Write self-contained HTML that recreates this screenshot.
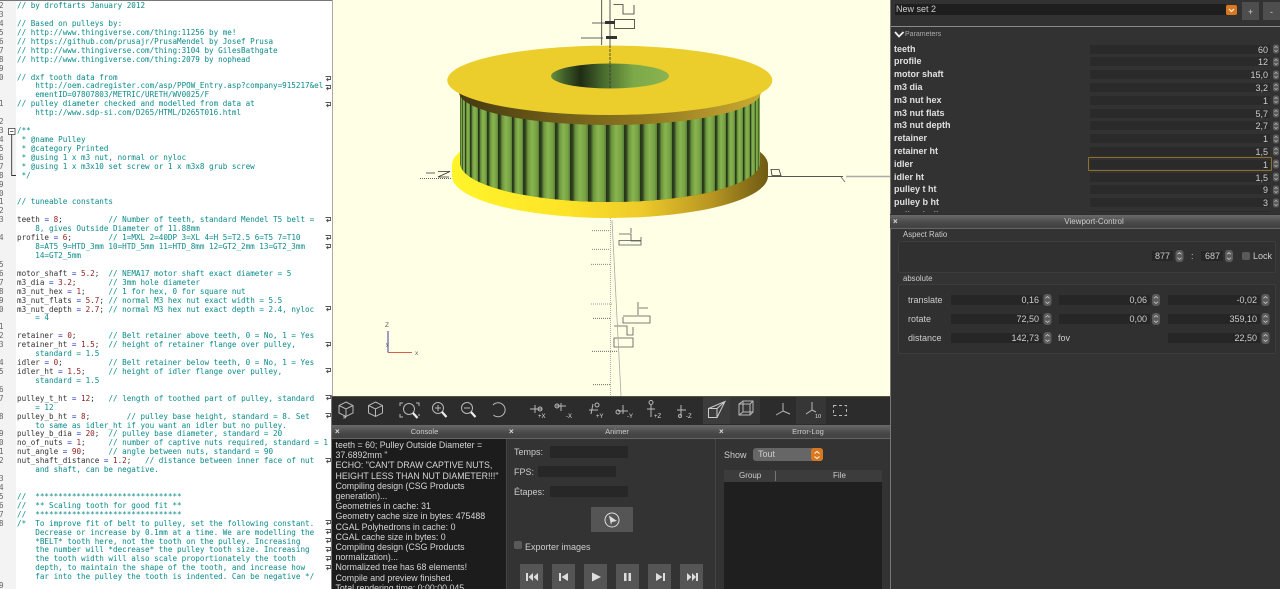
<!DOCTYPE html>
<html><head><meta charset="utf-8"><title>OpenSCAD</title>
<style>
*{box-sizing:border-box}
html,body{margin:0;padding:0;width:1280px;height:589px;overflow:hidden;background:#2f2f2f;font-family:"Liberation Sans",sans-serif;color:#ddd}
.a{position:absolute}
#ed{left:0;top:0;width:332px;height:589px;background:#fff;overflow:hidden;border-top:1px solid #777}
#gut{left:0;top:0;width:16px;height:589px;background:#f3f3f3}
pre{position:absolute;margin:0;font:7.6px/8.92px "DejaVu Sans Mono","Liberation Mono",monospace;color:#333}
pre i{font-style:normal;color:#0b8a8a}
pre b{font-weight:normal;color:#8e1a1a}
pre u{text-decoration:none;color:#2030c0}
.t{position:absolute;height:14px;background:linear-gradient(#6a6a6a,#494949 55%,#414141 90%,#777);font-size:7.5px;line-height:14px;text-align:center;color:#ccc}
.t s{position:absolute;left:3px;top:0;text-decoration:none;font-size:8px;color:#ddd;font-weight:bold}
.in{position:absolute;background:#272727}
.l{position:absolute;font-size:9px;line-height:12px;color:#ccc;white-space:nowrap}
.b{position:absolute;background:#555}
.r{position:relative;height:12.8px;line-height:12.8px;font-size:9px;font-weight:bold;color:#e0e0e0;padding-left:4px;white-space:nowrap}
.r span{position:absolute;left:200px;width:180px;top:2px;height:9px;background:#2a2a2a;color:#ccc;font-weight:normal;text-align:right;line-height:10px;padding-right:2px;font-size:9px}
.v{position:absolute;height:10px;background:#262626;color:#ccc;font-size:9px;line-height:10px;text-align:right;padding-right:3px}
</style></head><body>

<div id="ed" class="a">
<div id="gut" class="a"></div>
<pre style="left:-1px;top:1.2px;color:#666">2
3
4
5
6
7
8
9
0


1

2
3
4
5
6
7
8
9
0
1
2
3

4


5
6
7
8
9
0

1
2
3

4
5

6
7

8

9
0
1
2

3
4
5
6
7
8






9</pre>
<pre style="left:17px;top:1.2px"><i>// by droftarts January 2012</i>

<i>// Based on pulleys by:</i>
<i>// http://www.thingiverse.com/thing:11256 by me!</i>
<i>// https://github.com/prusajr/PrusaMendel by Josef Prusa</i>
<i>// http://www.thingiverse.com/thing:3104 by GilesBathgate</i>
<i>// http://www.thingiverse.com/thing:2079 by nophead</i>

<i>// dxf tooth data from</i>
<i>    http://oem.cadregister.com/asp/PPOW_Entry.asp?company=915217&amp;el</i>
<i>    ementID=07807803/METRIC/URETH/WV0025/F</i>
<i>// pulley diameter checked and modelled from data at</i>
<i>    http://www.sdp-si.com/D265/HTML/D265T016.html</i>

<i>/**</i>
<i> * @name Pulley</i>
<i> * @category Printed</i>
<i> * @using 1 x m3 nut, normal or nyloc</i>
<i> * @using 1 x m3x10 set screw or 1 x m3x8 grub screw</i>
<i> */</i>


<i>// tuneable constants</i>

teeth <u>=</u> <b>8</b>;          <i>// Number of teeth, standard Mendel T5 belt =</i>
<i>    8, gives Outside Diameter of 11.88mm</i>
profile <u>=</u> <b>6</b>;        <i>// 1=MXL 2=40DP 3=XL 4=H 5=T2.5 6=T5 7=T10</i>
<i>    8=AT5 9=HTD_3mm 10=HTD_5mm 11=HTD_8mm 12=GT2_2mm 13=GT2_3mm</i>
<i>    14=GT2_5mm</i>

motor_shaft <u>=</u> <b>5.2</b>;  <i>// NEMA17 motor shaft exact diameter = 5</i>
m3_dia <u>=</u> <b>3.2</b>;       <i>// 3mm hole diameter</i>
m3_nut_hex <u>=</u> <b>1</b>;     <i>// 1 for hex, 0 for square nut</i>
m3_nut_flats <u>=</u> <b>5.7</b>; <i>// normal M3 hex nut exact width = 5.5</i>
m3_nut_depth <u>=</u> <b>2.7</b>; <i>// normal M3 hex nut exact depth = 2.4, nyloc</i>
<i>    = 4</i>

retainer <u>=</u> <b>0</b>;       <i>// Belt retainer above teeth, 0 = No, 1 = Yes</i>
retainer_ht <u>=</u> <b>1.5</b>;  <i>// height of retainer flange over pulley,</i>
<i>    standard = 1.5</i>
idler <u>=</u> <b>0</b>;          <i>// Belt retainer below teeth, 0 = No, 1 = Yes</i>
idler_ht <u>=</u> <b>1.5</b>;     <i>// height of idler flange over pulley,</i>
<i>    standard = 1.5</i>

pulley_t_ht <u>=</u> <b>12</b>;   <i>// length of toothed part of pulley, standard</i>
<i>    = 12</i>
pulley_b_ht <u>=</u> <b>8</b>;        <i>// pulley base height, standard = 8. Set</i>
<i>    to same as idler_ht if you want an idler but no pulley.</i>
pulley_b_dia <u>=</u> <b>20</b>;  <i>// pulley base diameter, standard = 20</i>
no_of_nuts <u>=</u> <b>1</b>;     <i>// number of captive nuts required, standard = 1</i>
nut_angle <u>=</u> <b>90</b>;     <i>// angle between nuts, standard = 90</i>
nut_shaft_distance <u>=</u> <b>1.2</b>;   <i>// distance between inner face of nut</i>
<i>    and shaft, can be negative.</i>


<i>//  ********************************</i>
<i>//  ** Scaling tooth for good fit **</i>
<i>//  ********************************</i>
<i>/*  To improve fit of belt to pulley, set the following constant.</i>
<i>    Decrease or increase by 0.1mm at a time. We are modelling the</i>
<i>    *BELT* tooth here, not the tooth on the pulley. Increasing</i>
<i>    the number will *decrease* the pulley tooth size. Increasing</i>
<i>    the tooth width will also scale proportionately the tooth</i>
<i>    depth, to maintain the shape of the tooth, and increase how</i>
<i>    far into the pulley the tooth is indented. Can be negative */</i></pre>
</div>
<div class="a" style="left:331px;top:395px;width:1px;height:194px;background:#777"></div>

<!-- viewport -->
<div class="a" style="left:332px;top:0;width:558px;height:396px;background:#ffffe5;border-left:1px solid #aaa"></div>

<!-- toolbar -->
<div class="a" style="left:332px;top:396px;width:558px;height:29px;background:#2c2c2c;border-top:1px solid #55553a"></div>
<div class="a" style="left:703px;top:397px;width:27px;height:27px;background:#3c3c3c"></div>
<div class="a" style="left:730px;top:397px;width:30px;height:27px;background:#363636"></div>
<div class="a" style="left:796px;top:397px;width:30px;height:27px;background:#363636"></div>

<!-- dock titles -->
<div class="t" style="left:332px;top:425px;width:174px;padding-left:11px">Console<s>×</s></div>
<div class="t" style="left:506px;top:425px;width:210px;padding-left:12px">Animer<s>×</s></div>
<div class="t" style="left:716px;top:425px;width:174px;padding-left:10px">Error-Log<s>×</s></div>

<!-- console -->
<div class="a" style="left:332px;top:439px;width:174px;height:150px;background:#1c1c1c;overflow:hidden;padding:1px 0 0 3.5px;font-size:8.8px;line-height:10.2px;color:#d6d6d6;white-space:nowrap">teeth = 60; Pulley Outside Diameter =<br>37.6892mm "<br>ECHO: "CAN'T DRAW CAPTIVE NUTS,<br>HEIGHT LESS THAN NUT DIAMETER!!!"<br>Compiling design (CSG Products<br>generation)...<br>Geometries in cache: 31<br>Geometry cache size in bytes: 475488<br>CGAL Polyhedrons in cache: 0<br>CGAL cache size in bytes: 0<br>Compiling design (CSG Products<br>normalization)...<br>Normalized tree has 68 elements!<br>Compile and preview finished.<br>Total rendering time: 0:00:00.045</div>

<!-- animer -->
<div class="a" style="left:506px;top:439px;width:210px;height:150px;background:#333;border-left:1px solid #444;border-right:1px solid #444"></div>
<div class="l" style="left:514px;top:446px">Temps:</div>
<div class="in" style="left:550px;top:446px;width:78px;height:12px"></div>
<div class="l" style="left:514px;top:466px">FPS:</div>
<div class="in" style="left:538px;top:466px;width:78px;height:11px"></div>
<div class="l" style="left:514px;top:486px">Étapes:</div>
<div class="in" style="left:550px;top:486px;width:78px;height:11px"></div>
<div class="b" style="left:591px;top:507px;width:42px;height:25px"></div>
<div class="a" style="left:514px;top:541px;width:8px;height:8px;background:#5a5a5a;border-radius:2px"></div>
<div class="l" style="left:525px;top:541px">Exporter images</div>
<div class="b" style="left:520px;top:564px;width:23px;height:25px"></div>
<div class="b" style="left:552px;top:564px;width:23px;height:25px"></div>
<div class="b" style="left:584px;top:564px;width:23px;height:25px"></div>
<div class="b" style="left:616px;top:564px;width:23px;height:25px"></div>
<div class="b" style="left:648px;top:564px;width:23px;height:25px"></div>
<div class="b" style="left:680px;top:564px;width:23px;height:25px"></div>

<!-- error log -->
<div class="a" style="left:716px;top:439px;width:174px;height:150px;background:#333"></div>
<div class="l" style="left:724px;top:449px">Show</div>
<div class="a" style="left:753px;top:448px;width:70px;height:13px;background:#666;border-radius:3px;font-size:9px;line-height:13px;padding-left:5px;color:#ccc">Tout</div>
<div class="a" style="left:811px;top:448px;width:12px;height:13px;background:#d9781f;border-radius:3px"></div>
<div class="a" style="left:724px;top:470px;width:158px;height:12px;background:#3c3c3c"></div>
<div class="l" style="left:739px;top:470px;font-size:8px">Group</div>
<div class="a" style="left:775px;top:471px;width:1px;height:10px;background:#777"></div>
<div class="l" style="left:833px;top:470px;font-size:8px">File</div>
<div class="a" style="left:724px;top:482px;width:158px;height:107px;background:#1f1f1f"></div>

<!-- right top panel -->
<div class="a" style="left:890px;top:0;width:390px;height:214px;background:#323232;border-left:1px solid #777"></div>
<div class="a" style="left:895px;top:4px;width:331px;height:11px;background:#1e1e1e;font-size:9px;line-height:11px;padding-left:1px;color:#ccc">New set 2</div>
<div class="a" style="left:1226px;top:5px;width:11px;height:10px;background:#d9781f;border-radius:2px"></div>
<div class="b" style="left:1242px;top:2px;width:17px;height:18px;background:#4e4e4e;color:#ccc;font-size:9px;line-height:20px;text-align:center">+</div>
<div class="b" style="left:1263px;top:2px;width:17px;height:18px;background:#4e4e4e;color:#ccc;font-size:9px;line-height:20px;text-align:center">-</div>
<div class="a" style="left:891px;top:26px;width:389px;height:1px;background:#8a8a8a"></div>
<div class="l" style="left:905px;top:28.5px;font-size:7px;color:#aaa">Parameters</div>
<div class="a" style="left:890px;top:42.6px;width:390px;height:169px;overflow:hidden">
<div class="r">teeth<span>60</span></div>
<div class="r">profile<span>12</span></div>
<div class="r">motor shaft<span>15,0</span></div>
<div class="r">m3 dia<span>3,2</span></div>
<div class="r">m3 nut hex<span>1</span></div>
<div class="r">m3 nut flats<span>5,7</span></div>
<div class="r">m3 nut depth<span>2,7</span></div>
<div class="r">retainer<span>1</span></div>
<div class="r">retainer ht<span>1,5</span></div>
<div class="r">idler<span>1</span></div>
<div class="r">idler ht<span>1,5</span></div>
<div class="r">pulley t ht<span>9</span></div>
<div class="r">pulley b ht<span>3</span></div>
<div class="r">pulley b dia<span>20</span></div>
</div>
<div class="a" style="left:1088px;top:157px;width:184px;height:14px;border:1.5px solid #8f6e2c;border-radius:1px"></div>

<!-- viewport control -->
<div class="t" style="left:890px;top:215px;width:390px;font-size:8px;padding-left:18px">Viewport-Control<s>×</s></div>
<div class="a" style="left:890px;top:229px;width:390px;height:360px;background:#333;border-left:1px solid #777"></div>
<div class="l" style="left:903px;top:229px;font-size:7.8px">Aspect Ratio</div>
<div class="a" style="left:898px;top:241px;width:378px;height:32px;background:#303030;border:1px solid #3c3c3c;border-radius:2px"></div>
<div class="v" style="left:1152px;top:251px;width:21px">877</div>
<div class="l" style="left:1191px;top:250px">:</div>
<div class="v" style="left:1201px;top:251px;width:22px">687</div>
<div class="a" style="left:1242px;top:252px;width:8px;height:8px;background:#5a5a5a;border-radius:2px"></div>
<div class="l" style="left:1253px;top:250px">Lock</div>
<div class="l" style="left:903px;top:273px;font-size:7.8px">absolute</div>
<div class="a" style="left:898px;top:284px;width:378px;height:70px;background:#303030;border:1px solid #3c3c3c;border-radius:2px"></div>
<div class="l" style="left:908px;top:294px">translate</div>
<div class="l" style="left:908px;top:313px">rotate</div>
<div class="l" style="left:908px;top:332px">distance</div>
<div class="l" style="left:1058px;top:332px">fov</div>
<div class="v" style="left:951px;top:295px;width:91px">0,16</div>
<div class="v" style="left:1059px;top:295px;width:91px">0,06</div>
<div class="v" style="left:1168px;top:295px;width:92px">-0,02</div>
<div class="v" style="left:951px;top:314px;width:91px">72,50</div>
<div class="v" style="left:1059px;top:314px;width:91px">0,00</div>
<div class="v" style="left:1168px;top:314px;width:92px">359,10</div>
<div class="v" style="left:951px;top:333px;width:91px">142,73</div>
<div class="v" style="left:1168px;top:333px;width:92px">22,50</div>

<svg class="a" style="left:0;top:0" width="1280" height="589" viewBox="0 0 1280 589" xmlns="http://www.w3.org/2000/svg">
<defs>
<linearGradient id="t"><stop offset="0" stop-color="#26331a"/><stop offset=".14" stop-color="#2e3f1e"/><stop offset=".3" stop-color="#6a963c"/><stop offset=".55" stop-color="#8ab450"/><stop offset=".85" stop-color="#76a244"/><stop offset="1" stop-color="#5a8034"/></linearGradient>
<linearGradient id="fl" gradientUnits="userSpaceOnUse" x1="452" y1="0" x2="768" y2="0"><stop offset="0" stop-color="#fff42a"/><stop offset=".35" stop-color="#fde428"/><stop offset=".6" stop-color="#eeca2a"/><stop offset=".82" stop-color="#b89622"/><stop offset="1" stop-color="#6e5a14"/></linearGradient>
<linearGradient id="rim" gradientUnits="userSpaceOnUse" x1="447" y1="0" x2="772" y2="0"><stop offset="0" stop-color="#3e3510"/><stop offset=".3" stop-color="#6a5818"/><stop offset=".6" stop-color="#8e7620"/><stop offset=".85" stop-color="#b89a2c"/><stop offset="1" stop-color="#d0b030"/></linearGradient>
<linearGradient id="hole"><stop offset="0" stop-color="#6a9040"/><stop offset=".12" stop-color="#3f5c28"/><stop offset=".25" stop-color="#1e2c14"/><stop offset=".45" stop-color="#4a6c2e"/><stop offset=".7" stop-color="#7ca848"/><stop offset="1" stop-color="#8ab450"/></linearGradient>
<clipPath id="body"><path d="M460 90H760V163A150 39 0 0 1 460 163Z"/></clipPath>
<symbol id="sp" viewBox="0 0 8 12" overflow="visible"><rect width="8" height="12" rx="3" fill="#5c5c5c"/><path d="M2 4.3 4 2.5 6 4.3M2 7.7 4 9.5 6 7.7" fill="none" stroke="#ccc" stroke-width=".8"/></symbol>
<symbol id="w" viewBox="0 0 7 7" overflow="visible"><path d="M.5 1.5H5.5V4.5H1.8M3.2 3 1.6 4.5 3.2 6" fill="none" stroke="#555" stroke-width=".9"/></symbol>
</defs>

<!-- wrap arrows -->
<g>
<use href="#w" x="325" y="75" width="7" height="7"/><use href="#w" x="325" y="84" width="7" height="7"/><use href="#w" x="325" y="101" width="7" height="7"/>
<use href="#w" x="325" y="216" width="7" height="7"/><use href="#w" x="325" y="234" width="7" height="7"/><use href="#w" x="325" y="243" width="7" height="7"/>
<use href="#w" x="325" y="305" width="7" height="7"/><use href="#w" x="325" y="341" width="7" height="7"/><use href="#w" x="325" y="367" width="7" height="7"/>
<use href="#w" x="325" y="394" width="7" height="7"/><use href="#w" x="325" y="412" width="7" height="7"/><use href="#w" x="325" y="457" width="7" height="7"/>
<use href="#w" x="325" y="519" width="7" height="7"/><use href="#w" x="325" y="528" width="7" height="7"/><use href="#w" x="325" y="537" width="7" height="7"/>
<use href="#w" x="325" y="546" width="7" height="7"/><use href="#w" x="325" y="555" width="7" height="7"/><use href="#w" x="325" y="564" width="7" height="7"/>
</g>
<!-- fold -->
<rect x="8.5" y="128.5" width="6.5" height="6" fill="#fff" stroke="#444" stroke-width=".8"/><path d="M10 131.5H13.5" stroke="#444" stroke-width=".8"/>
<path d="M11.7 134.5V175.5H16" fill="none" stroke="#333" stroke-width=".9"/>

<!-- axes behind model -->
<g fill="none" stroke="#333" stroke-width=".8">
<path d="M601.7 0V45M610 0V60"/>
<path d="M592 23H615M581 38H603"/>
<path d="M614 5V4.5H623V14H634V5"/>
<rect x="614.5" y="19.5" width="20" height="9"/>
<path d="M426 173H435M438 171.5H450L438 177H449"/>
<path d="M771 169.500H779L781 175.500H772Z"/>
<path d="M768 176.500H843" stroke="#555" stroke-width="1"/>
<path d="M846 176.500H890" stroke="#aaa" stroke-width="1.500"/>
<path d="M841 177 845 182" stroke="#666"/>
<path d="M420 178.500H452" stroke-dasharray="1 1"/>
<path d="M619 234H631V241H641V237M619 240.5H641V245H619Z" stroke="#555"/>
<path d="M631 228V233M638 302V315M639 308H648M623 317V323H650V316H623" stroke="#555"/>
<path d="M614 347V338H633V347ZM614 326H627V335H633V327" stroke="#555"/>
<path d="M610.6 218V396" stroke="#999" stroke-dasharray="1 1"/>
<path d="M612 220 621 396" stroke="#aaa"/>
<path d="M592 230.7H610M592 249.3H610M591 264.3H611M591 304H612" stroke="#777" stroke-dasharray="1 1"/>
<path d="M593 318.3H611M592 351.3H618M593 384.7H610" stroke="#555" stroke-dasharray="1 1"/>
</g>

<!-- pulley -->
<ellipse cx="610" cy="176" rx="158" ry="42" fill="url(#fl)"/>
<rect x="452" y="165" width="316" height="11" fill="url(#fl)"/>
<ellipse cx="610" cy="165" rx="158" ry="42" fill="url(#fl)"/>
<g clip-path="url(#body)">
<rect x="455" y="88" width="310" height="120" fill="#4c6e2c"/>
<g fill="url(#t)">
<rect x="460" y="88" width="2" height="120"/><rect x="462" y="88" width="3" height="120"/><rect x="465" y="88" width="5" height="120"/><rect x="470" y="88" width="8" height="120"/><rect x="478" y="88" width="9" height="120"/><rect x="487" y="88" width="11" height="120"/><rect x="498" y="88" width="14" height="120"/><rect x="512" y="88" width="11" height="120"/><rect x="523" y="88" width="16" height="120"/><rect x="539" y="88" width="16" height="120"/><rect x="555" y="88" width="15" height="120"/><rect x="570" y="88" width="18" height="120"/><rect x="588" y="88" width="18" height="120"/><rect x="606" y="88" width="18" height="120"/><rect x="624" y="88" width="16" height="120"/><rect x="640" y="88" width="17" height="120"/><rect x="657" y="88" width="15" height="120"/><rect x="672" y="88" width="15" height="120"/><rect x="687" y="88" width="15" height="120"/><rect x="702" y="88" width="13" height="120"/><rect x="715" y="88" width="11" height="120"/><rect x="726" y="88" width="9" height="120"/><rect x="735" y="88" width="8" height="120"/><rect x="743" y="88" width="7" height="120"/><rect x="750" y="88" width="5" height="120"/><rect x="755" y="88" width="3" height="120"/><rect x="758" y="88" width="2" height="120"/>
</g></g>
<ellipse cx="610" cy="92" rx="151" ry="33" fill="url(#rim)"/>
<ellipse cx="609.8" cy="80.3" rx="162.5" ry="34.7" fill="#ebce2c"/>
<ellipse cx="610" cy="76" rx="59" ry="12.5" fill="url(#hole)"/>
<path d="M610 45V88" stroke="#333" stroke-width=".8" stroke-dasharray="3 1" fill="none"/>
<rect x="605" y="21" width="10" height="3" fill="#333"/><rect x="606" y="36" width="11" height="3" fill="#333"/>

<!-- axes widget -->
<path d="M388 331V352.5" stroke="#7c7cc0" stroke-width="1.5" fill="none"/>
<path d="M388 352.5H412" stroke="#d06050" stroke-width="1" fill="none"/>
<text x="385" y="327" font-family="Liberation Sans,sans-serif" font-size="6.5" fill="#555">Z</text>
<text x="415" y="355" font-family="Liberation Sans,sans-serif" font-size="6.5" fill="#666">x</text>
<text x="386" y="346" font-family="Liberation Sans,sans-serif" font-size="5" fill="#444">y</text>

<!-- toolbar icons -->
<g fill="none" stroke="#b8b8b8" stroke-width="1">
<path d="M346 402 353 405.5V413L346 416.5 339 413V405.5ZM339 405.5 346 409 353 405.5M346 409V416"/>
<path d="M375.500 402 382.500 405.500V413L375.500 416.500 368.500 413V405.500ZM368.500 405.500 375.500 409 382.500 405.500M375.500 409V416"/>
<path d="M403 403H400V406M416 403H419V406M400 414V417H403M419 414V416"/>
<circle cx="409" cy="409" r="5.500"/><path d="M413 413 417.500 418" stroke="#eee" stroke-width="2.200"/>
<circle cx="438" cy="408" r="5.500"/><path d="M435 408H441M438 405V411"/><path d="M442 412 446.500 417" stroke="#eee" stroke-width="2.200"/>
<circle cx="467" cy="408" r="5.500"/><path d="M464 408H470"/><path d="M471 412 475.500 417" stroke="#eee" stroke-width="2.200"/>
<path d="M493 405A7 7 0 1 1 493.500 415" stroke-width="1"/>
<path d="M530 409H542M535 405V413"/><circle cx="540" cy="409" r="2"/>
<path d="M556 406H566M561 403V411"/><circle cx="557" cy="406" r="2"/>
<path d="M589 410H598M593 404 591 414"/><circle cx="597" cy="405" r="2"/>
<path d="M618 411H628M623 405V414"/><circle cx="618" cy="412" r="2"/>
<path d="M647 409H655M651 404V417"/><circle cx="651" cy="402.500" r="2"/>
<path d="M677 410H686M681 405V416"/><circle cx="680" cy="416" r="1.500"/>
<path d="M708.500 408.500H717V417.500H708.500ZM708.500 408.500 725 401.500 717 417.500M717 408.500 725 401.500" stroke="#ccc"/>
<rect x="739" y="404" width="11" height="11"/><rect x="743" y="401" width="10" height="11"/><path d="M739 404 743 401M750 404 753 401M739 415 743 412M750 415 753 412"/>
<path d="M783 403V411L776 415M783 411 790 414"/>
<path d="M812 402V410L806 414M812 410 816 412"/>
<rect x="833.500" y="405.500" width="13" height="10" stroke-dasharray="3 2.500"/>
</g>
<g fill="#ddd" font-family="Liberation Sans,sans-serif" font-size="6">
<text x="343" y="419" font-weight="bold">»</text>
<text x="538" y="418">+X</text><text x="566" y="418">-X</text><text x="596" y="418">+Y</text><text x="627" y="418">-Y</text><text x="654" y="418">+Z</text><text x="686" y="418">-Z</text>
<text x="815" y="418" font-size="5.500">10</text>
</g>
<!-- animate button + transport -->
<circle cx="612" cy="520" r="7" fill="none" stroke="#ddd" stroke-width="1"/><path d="M609 515.500 617 521 612 522 611 525Z" fill="#ddd"/>
<g fill="#ddd">
<path d="M526 573H528V581H526ZM533 573V581L528.500 577ZM538 573V581L533.500 577Z"/>
<path d="M559 573H561V581H559ZM568 573V581L561.500 577Z"/>
<path d="M592 572.500 601 577 592 581.500Z"/>
<path d="M624 573H626.500V581H624ZM628.500 573H631V581H628.500Z"/>
<path d="M656 573V581L662.500 577ZM663 573H665V581H663Z"/>
<path d="M687 573V581L691.500 577ZM692 573V581L696 577ZM696 573H698V581H696Z"/>
</g>
<!-- orange chevrons -->
<path d="M1229 9 1231.500 11.500 1234 9" fill="none" stroke="#fff" stroke-width="1"/>
<path d="M814.500 453.500 817 451.500 819.500 453.500M814.500 456.500 817 458.500 819.500 456.500" fill="none" stroke="#fff" stroke-width=".9"/>
<path d="M895 32 899 36.500 903.500 32" fill="none" stroke="#eee" stroke-width="1.800"/>
<!-- param spinners -->
<g>
<use href="#sp" x="1273" y="43" width="6" height="12"/><use href="#sp" x="1273" y="56" width="6" height="12"/><use href="#sp" x="1273" y="69" width="6" height="12"/><use href="#sp" x="1273" y="81" width="6" height="12"/><use href="#sp" x="1273" y="94" width="6" height="12"/><use href="#sp" x="1273" y="107" width="6" height="12"/><use href="#sp" x="1273" y="120" width="6" height="12"/><use href="#sp" x="1273" y="133" width="6" height="12"/><use href="#sp" x="1273" y="145" width="6" height="12"/><use href="#sp" x="1273" y="158" width="6" height="12"/><use href="#sp" x="1273" y="171" width="6" height="12"/><use href="#sp" x="1273" y="184" width="6" height="12"/><use href="#sp" x="1273" y="197" width="6" height="12"/>
<use href="#sp" x="1175.500" y="250" width="8" height="12"/><use href="#sp" x="1225" y="250" width="8" height="12"/>
<use href="#sp" x="1043.500" y="294" width="8" height="12"/><use href="#sp" x="1152" y="294" width="8" height="12"/><use href="#sp" x="1261.500" y="294" width="8" height="12"/>
<use href="#sp" x="1043.500" y="313" width="8" height="12"/><use href="#sp" x="1152" y="313" width="8" height="12"/><use href="#sp" x="1261.500" y="313" width="8" height="12"/>
<use href="#sp" x="1043.500" y="332" width="8" height="12"/><use href="#sp" x="1261.500" y="332" width="8" height="12"/>
</g>
</svg>
</body></html>
